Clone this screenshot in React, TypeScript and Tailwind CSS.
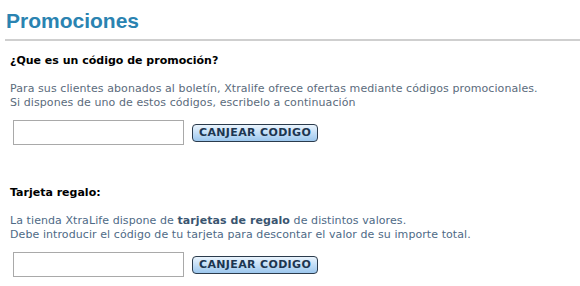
export default function App() {
  return (
    <div className="w-[580px] h-[286px] bg-white overflow-hidden font-['DejaVu_Sans',sans-serif]">
      {/* Header */}
      <h1 className="pl-[6px] pt-[9px] h-[39px] text-[21px] leading-[24px] font-bold text-[#2a83b1] font-['Liberation_Sans',Arial,sans-serif]">
        Promociones
      </h1>
      <div className="ml-[5px] h-[2px] bg-[#cfcfcf]" />

      {/* Codigo de promocion */}
      <section className="pl-[10px] pt-[13px]">
        <h2 className="text-[11px] leading-[14px] font-bold text-black">¿Que es un código de promoción?</h2>
        <p className="mt-[14px] text-[11px] leading-[14px] tracking-[0.08px] text-[#5b6b7c]">
          Para sus clientes abonados al boletín, Xtralife ofrece ofertas mediante códigos promocionales.
          <br />
          Si dispones de uno de estos códigos, escribelo a continuación
        </p>
        <CodeForm />
      </section>

      {/* Tarjeta regalo */}
      <section className="pl-[10px] pt-[41px]">
        <h2 className="text-[11px] leading-[14px] font-bold text-black">Tarjeta regalo:</h2>
        <p className="mt-[14px] text-[11px] leading-[14px] tracking-[0.08px] text-[#4e6a86]">
          La tienda XtraLife dispone de <b className="text-[#3a5570]">tarjetas de regalo</b> de distintos valores.
          <br />
          Debe introducir el código de tu tarjeta para descontar el valor de su importe total.
        </p>
        <CodeForm />
      </section>
    </div>
  )
}

function CodeForm() {
  return (
    <div className="mt-[10px] ml-[3px] flex items-center gap-[8px]">
      <input
        type="text"
        className="w-[171px] h-[25px] border border-[#a9a9a9] bg-white outline-none"
      />
      <button className="h-[18px] px-[6px] rounded-[4px] border border-[#2b3b4c] bg-gradient-to-b from-[#eaf4fd] to-[#9cc7ee] text-[11px] leading-[14px] font-bold tracking-[0.35px] text-[#1c3550]">
        CANJEAR CODIGO
      </button>
    </div>
  )
}
